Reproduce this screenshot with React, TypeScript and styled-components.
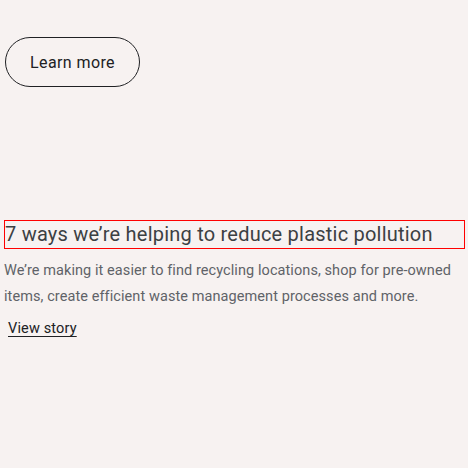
import React from "react";
import styled, { createGlobalStyle } from "styled-components";

const Global = createGlobalStyle`
  html, body {
    margin: 0;
    padding: 0;
    background: #f7f2f1;
  }
  body {
    font-family: Roboto, "Noto Sans", Arial, sans-serif;
    color: #202124;
  }
`;

const App = () => {
  return (
    <>
      <Global />
      <S.Page>
        <S.Button>Learn more</S.Button>
        <S.Story>
          <S.Title>7 ways we’re helping to reduce plastic pollution</S.Title>
          <S.Text>
            We’re making it easier to find recycling locations, shop for pre-owned items, create
            efficient waste management processes and more.
          </S.Text>
          <S.Link href="#">View story</S.Link>
        </S.Story>
      </S.Page>
    </>
  );
};

const S = {
  Page: styled.div`
    width: 468px;
    height: 468px;
    box-sizing: border-box;
    padding: 37px 0 0 4px;
    display: flex;
    flex-direction: column;
    align-items: flex-start;
  `,
  Button: styled.button`
    margin-left: 1px;
    width: 135px;
    height: 50px;
    box-sizing: border-box;
    border: 1px solid #202124;
    border-radius: 25px;
    background: transparent;
    font-family: Roboto, "Noto Sans", Arial, sans-serif;
    font-size: 16px;
    letter-spacing: 0.4px;
    color: #202124;
    padding: 0;
  `,
  Story: styled.div`
    margin-top: 133px;
    display: flex;
    flex-direction: column;
    align-items: flex-start;
  `,
  Title: styled.h2`
    margin: 0;
    width: 461px;
    height: 29px;
    box-sizing: border-box;
    border: 1px solid #ff0000;
    font-size: 20px;
    font-weight: 400;
    line-height: 27px;
    letter-spacing: 0.22px;
    color: #3c4043;
    white-space: nowrap;
  `,
  Text: styled.p`
    margin: 9px 0 0;
    width: 458px;
    font-size: 14.5px;
    line-height: 26px;
    letter-spacing: 0.08px;
    color: #5f6368;
  `,
  Link: styled.a`
    margin: 9px 0 0 4px;
    font-size: 14.5px;
    font-weight: 400;
    line-height: 20px;
    letter-spacing: 0.15px;
    color: #202124;
    text-decoration: underline;
    text-underline-offset: 3px;
  `,
};

export default App;
